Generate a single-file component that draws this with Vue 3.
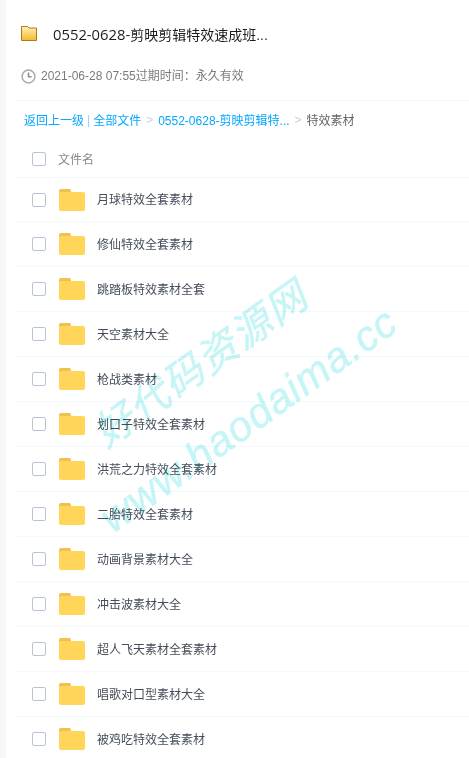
<script setup>
const folders = [
  '月球特效全套素材',
  '修仙特效全套素材',
  '跳踏板特效素材全套',
  '天空素材大全',
  '枪战类素材',
  '划口子特效全套素材',
  '洪荒之力特效全套素材',
  '二胎特效全套素材',
  '动画背景素材大全',
  '冲击波素材大全',
  '超人飞天素材全套素材',
  '唱歌对口型素材大全',
  '被鸡吃特效全套素材'
]
</script>

<template>
  <div class="page">
    <div class="side"></div>
    <div class="main">
      <div class="head">
        <svg class="big-folder" width="16" height="15" viewBox="0 0 16 15">
          <defs>
            <linearGradient id="fg" x1="0" y1="0" x2="0" y2="1">
              <stop offset="0" stop-color="#fff0b8" />
              <stop offset="1" stop-color="#f2b92e" />
            </linearGradient>
          </defs>
          <path d="M.5 14.5V.5h6l1.5 1.5h7.5v12.5z" fill="url(#fg)" stroke="#b07a18" />
        </svg>
        <h1 class="title"><span class="num">0552-0628-</span>剪映剪辑特效速成班...</h1>
      </div>
      <div class="meta">
        <svg class="clock" width="15" height="15" viewBox="0 0 15 15" fill="none" stroke="#a8a8a8">
          <circle cx="7.5" cy="7.5" r="6.4" stroke-width="1.5" />
          <path d="M7.5 3.6v4.2h3" stroke-width="1.5" stroke="#8c8c8c" />
        </svg>
        <span class="meta-text">2021-06-28 07:55过期时间：永久有效</span>
      </div>
      <div class="crumbs">
        <a>返回上一级</a>
        <span class="pipe">|</span>
        <a>全部文件</a>
        <span class="gt">&gt;</span>
        <a>0552-0628-剪映剪辑特...</a>
        <span class="gt">&gt;</span>
        <span class="cur">特效素材</span>
      </div>
      <div class="list-head">
        <span class="check"></span>
        <span class="col-name">文件名</span>
      </div>
      <ul class="list">
        <li v-for="name in folders" :key="name" class="row">
          <span class="check"></span>
          <svg class="folder" width="26" height="22" viewBox="0 0 26 22">
            <path d="M0 2a2 2 0 0 1 2-2h8a2 2 0 0 1 2 2v2H0z" fill="#f0c14f" />
            <rect y="3" width="26" height="19" rx="2" fill="#ffd659" />
          </svg>
          <span class="name">{{ name }}</span>
        </li>
      </ul>
    </div>
    <div class="mark">
      <div class="mark-cn">好代码资源网</div>
      <div class="mark-en">www.haodaima.cc</div>
    </div>
  </div>
</template>

<style>
html, body {
  background: #fff;
  overflow: hidden;
}
</style>

<style scoped>
.page {
  position: relative;
  display: flex;
  height: 758px;
  overflow: hidden;
  font-family: "Liberation Sans", "Noto Sans CJK SC", sans-serif;
  background: #fff;
}
.side {
  width: 6px;
  flex: none;
  background: #f7f7f7;
}
.main {
  flex: 1;
  min-width: 0;
  padding-left: 10px;
}
.head {
  display: flex;
  align-items: center;
  height: 67px;
  padding-left: 5px;
}
.big-folder {
  flex: none;
}
.title {
  margin: 1px 0 0 16px;
  font-size: 14px;
  font-weight: 400;
  color: #1c1c1c;
}
.num {
  font-family: "Open Sans", sans-serif;
  font-size: 14.8px;
}
.meta {
  display: flex;
  align-items: center;
  height: 16px;
  border-bottom: 1px solid #f4f5f6;
  padding: 1px 0 16px 5px;
  font-size: 12px;
  color: #7b7b7b;
}
.meta-text {
  padding-bottom: 4px;
}
.clock {
  margin-right: 5px;
}
.crumbs {
  display: flex;
  align-items: center;
  height: 37px;
  padding: 0 0 2px 8px;
  font-size: 12px;
  color: #06a7ff;
}
.pipe {
  margin: 0 3px;
  color: #8fd2f8;
}
.gt {
  margin: 0 5px;
  color: #c8d0e0;
}
.cur {
  color: #666;
}
.list-head {
  display: flex;
  align-items: center;
  height: 37px;
  border-bottom: 1px solid #f4f5f9;
  padding-left: 16px;
  font-size: 12px;
  color: #8a8a8a;
}
.col-name {
  margin-left: 12px;
}
.check {
  flex: none;
  box-sizing: border-box;
  width: 14px;
  height: 14px;
  border: 1px solid #b8c4d6;
  border-radius: 2px;
  background: #fff;
}
.list {
  margin: 0;
  padding: 0;
  list-style: none;
}
.row {
  display: flex;
  align-items: center;
  box-sizing: border-box;
  height: 45px;
  border-bottom: 1px solid #f4f7fb;
  padding-left: 16px;
  font-size: 12px;
  color: #454d5a;
}
.row:first-child {
  height: 44px;
}
.folder {
  flex: none;
  margin-left: 13px;
}
.name {
  margin-left: 12px;
  padding-bottom: 2px;
}
.mark {
  position: absolute;
  left: 0;
  top: 0;
  pointer-events: none;
  mix-blend-mode: multiply;
  color: #c6f5f6;
  font-family: "Liberation Sans", "Noto Sans CJK SC", sans-serif;
}
.mark-cn {
  position: absolute;
  left: 75px;
  top: 342px;
  font-size: 40px;
  line-height: 44px;
  font-style: italic;
  white-space: nowrap;
  letter-spacing: 2px;
  -webkit-text-stroke: 0.5px #c6f5f6;
  transform: rotate(-35.5deg);
}
.mark-en {
  position: absolute;
  left: 72px;
  top: 398px;
  font-size: 42px;
  line-height: 44px;
  font-style: italic;
  white-space: nowrap;
  letter-spacing: 1px;
  -webkit-text-stroke: 0.5px #c6f5f6;
  transform: rotate(-35.5deg);
}
</style>
